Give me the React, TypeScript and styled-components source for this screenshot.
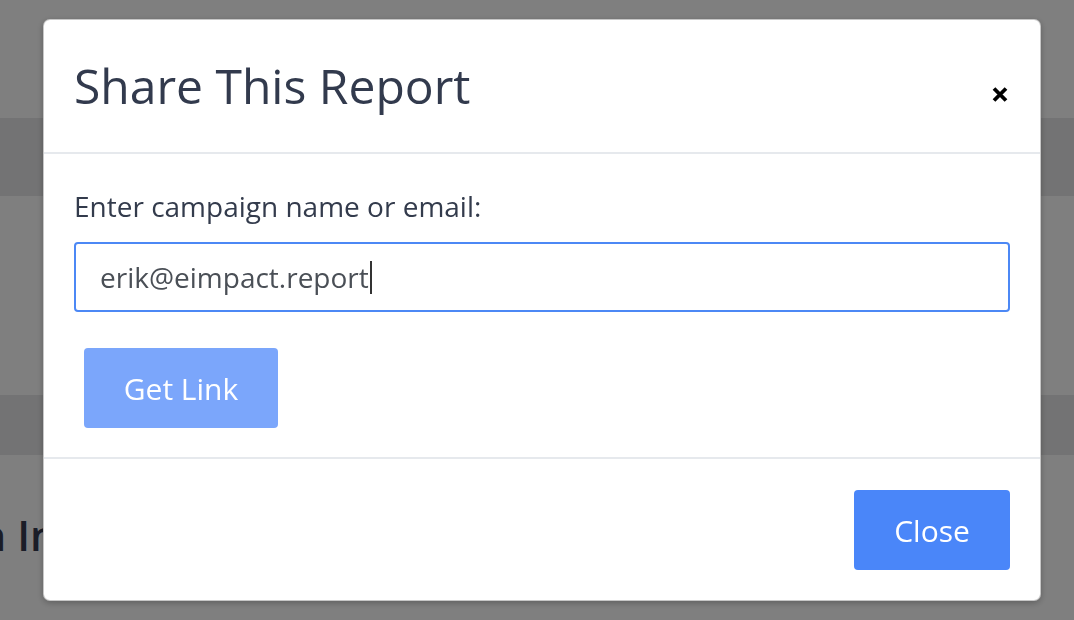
import React from "react";
import styled, { createGlobalStyle } from "styled-components";

const GlobalStyle = createGlobalStyle`
  html, body {
    margin: 0;
    padding: 0;
    background: #ffffff;
    font-family: "Open Sans", "Noto Sans", "Liberation Sans", sans-serif;
    overflow: hidden;
  }
  * { box-sizing: border-box; }
`;

const Page = styled.div`
  width: 1074px;
  height: 620px;
  overflow: hidden;
  display: flex;
  flex-direction: column;
`;

const Band = styled.div<{ $h: number; $shade?: boolean }>`
  height: ${(p) => p.$h}px;
  flex: 0 0 auto;
  background: ${(p) => (p.$shade ? "#e7e7e8" : "#ffffff")};
`;

const Section = styled.div`
  flex: 1 1 auto;
  background: #ffffff;
  padding-top: 55px;
  white-space: nowrap;
`;

const PageHeading = styled.h1`
  margin: 0;
  font-size: 42px;
  line-height: 1.2;
  font-weight: 600;
  color: #363a4e;
  text-indent: -197px;
`;

const Overlay = styled.div`
  position: fixed;
  inset: 0;
  background: rgba(0, 0, 0, 0.5);
  padding: 19px 0 0 43px;
`;

const Modal = styled.div`
  width: 998px;
  background: #ffffff;
  border: 1px solid rgba(0, 0, 0, 0.22);
  border-radius: 7px;
  box-shadow: 0 2px 6px rgba(0, 0, 0, 0.25);
  display: flex;
  flex-direction: column;
`;

const Header = styled.div`
  height: 134px;
  padding: 0 32px 0 30px;
  border-bottom: 2px solid #e6e9ed;
  display: flex;
  align-items: center;
  justify-content: space-between;
`;

const Title = styled.h2`
  margin: 0;
  font-size: 48px;
  font-weight: 400;
  line-height: 1.2;
  color: #323a4d;
`;

const CloseX = styled.button`
  border: 0;
  background: none;
  padding: 0;
  margin-top: 16px;
  width: 16px;
  height: 15px;
  display: flex;
  cursor: pointer;
`;

const Body = styled.div`
  padding: 32px 30px 29px 30px;
  border-bottom: 2px solid #e6e9ed;
  display: flex;
  flex-direction: column;
  align-items: flex-start;
`;

const Label = styled.label`
  display: block;
  font-size: 28px;
  line-height: 40px;
  color: #333b4c;
  margin-bottom: 16px;
`;

const Field = styled.div`
  width: 100%;
  height: 70px;
  border: 2px solid #4c88f5;
  border-radius: 4px;
  padding-left: 24px;
  display: flex;
  align-items: center;
  font-size: 28px;
  color: #4a4f56;
`;

const Caret = styled.span`
  display: inline-block;
  width: 2px;
  height: 33px;
  margin-left: 1px;
  background: #333333;
`;

const Button = styled.button<{ $light?: boolean }>`
  border: 0;
  border-radius: 4px;
  height: 80px;
  font-family: "Open Sans", "Noto Sans", "Liberation Sans", sans-serif;
  font-size: 30px;
  color: #ffffff;
  background: ${(p) => (p.$light ? "#7ba6fb" : "#4a86f9")};
  cursor: pointer;
`;

const GetLink = styled(Button)`
  width: 194px;
  margin: 36px 0 0 10px;
`;

const Footer = styled.div`
  padding: 31px 30px 30px 30px;
  display: flex;
  justify-content: flex-end;
`;

const CloseButton = styled(Button)`
  width: 156px;
`;

export default function App() {
  return (
    <>
      <GlobalStyle />
      <Page>
        <Band $h={118} />
        <Band $h={78} $shade />
        <Band $h={199} />
        <Band $h={60} $shade />
        <Section>
          <PageHeading>Campaign Insights</PageHeading>
        </Section>
      </Page>
      <Overlay>
        <Modal role="dialog" aria-label="Share This Report">
          <Header>
            <Title>Share This Report</Title>
            <CloseX aria-label="Close">
              <svg width="16" height="15" viewBox="0 0 16 15">
                <path
                  d="M2 1.5 L14 13.5 M14 1.5 L2 13.5"
                  stroke="#000"
                  strokeWidth="3.8"
                  strokeLinecap="butt"
                  fill="none"
                />
              </svg>
            </CloseX>
          </Header>
          <Body>
            <Label>Enter campaign name or email:</Label>
            <Field>
              <span>erik@eimpact.report</span>
              <Caret />
            </Field>
            <GetLink $light>Get Link</GetLink>
          </Body>
          <Footer>
            <CloseButton>Close</CloseButton>
          </Footer>
        </Modal>
      </Overlay>
    </>
  );
}
